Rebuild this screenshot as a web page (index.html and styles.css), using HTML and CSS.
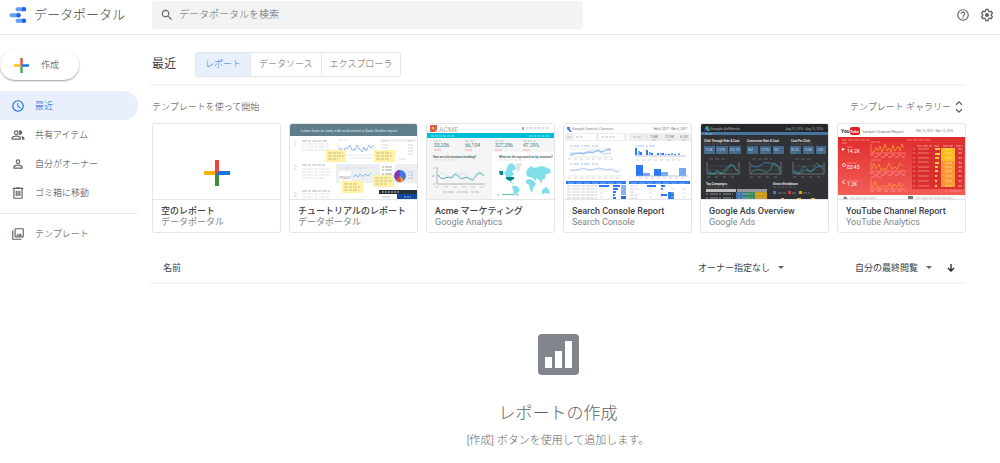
FILE: index.html
```html
<!DOCTYPE html>
<html lang="ja">
<head>
    <meta charset="UTF-8">
    <meta name="viewport" content="width=device-width, initial-scale=1.0">
    <title>データポータル</title>
    <link rel="stylesheet" href="styles.css">
</head>
<body>
    <header class="header">
        <a class="brand" href="#">
            <svg class="logo" viewBox="0 0 18 16" width="18" height="16">
                <path stroke="#669df6" stroke-width="4" stroke-linecap="round" d="M8.500 2.300h6M2.500 8.200h7M8.500 13.700h6"/>
                <circle cx="15" cy="2.300" r="2.200" fill="#1967e8"/>
                <circle cx="9.500" cy="8.200" r="2.200" fill="#1967e8"/>
                <circle cx="15" cy="13.700" r="2.200" fill="#1967e8"/>
            </svg>
            <span>データポータル</span>
        </a>
        <label class="search">
            <svg viewBox="0 0 24 24" width="14" height="14"><path d="M15.500 14h-.79l-.28-.27a6.500 6.500 0 1 0-.7.7l.27.28v.79l5 4.990L20.490 19zm-6 0a4.500 4.500 0 1 1 0-9 4.500 4.500 0 0 1 0 9z"/></svg>
            <input type="search" placeholder="データポータルを検索" aria-label="データポータルを検索">
        </label>
        <div class="header-actions">
            <button class="icon-button" aria-label="ヘルプ">
                <svg viewBox="0 0 24 24" width="14" height="14"><path d="M11 18h2v-2h-2zm1-16a10 10 0 1 0 0 20 10 10 0 0 0 0-20zm0 18a8 8 0 1 1 0-16 8 8 0 0 1 0 16zm0-14a4 4 0 0 0-4 4h2a2 2 0 1 1 4 0c0 2-3 1.750-3 5h2c0-2.250 3-2.500 3-5a4 4 0 0 0-4-4z"/></svg>
            </button>
            <button class="icon-button" aria-label="設定">
                <svg viewBox="0 0 24 24" width="14" height="14"><path fill="none" stroke="#5f6368" stroke-width="2.200" stroke-linejoin="round" d="M10 2.500h4l.6 2.800 2 1.200 2.700-.9 2 3.500-2 1.900v2l2 1.900-2 3.500-2.700-.9-2 1.200-.6 2.800h-4l-.6-2.800-2-1.200-2.700.9-2-3.500 2-1.900v-2l-2-1.900 2-3.500 2.700.9 2-1.200z"/><circle cx="12" cy="12" r="3.600"/></svg>
            </button>
        </div>
    </header>

    <div class="layout">
        <nav class="sidebar">
            <button class="create">
                <svg viewBox="0 0 26 26" width="15" height="15"><path fill="#ea4335" d="M11 0h4v11l-4 4z"/><path fill="#fbbc04" d="M0 11h11v4H0z"/><path fill="#34a853" d="M11 15h4v11h-4z"/><path fill="#1a73e8" d="M15 11h11v4H11z"/></svg>
                作成
            </button>
            <a class="nav-item active" href="#">
                <svg viewBox="0 0 24 24" width="14" height="14"><path d="M12 2a10 10 0 1 0 0 20 10 10 0 0 0 0-20zm0 18a8 8 0 1 1 0-16 8 8 0 0 1 0 16zm.5-13H11v6l5.200 3.200.8-1.300-4.500-2.700z"/></svg>
                最近
            </a>
            <a class="nav-item" href="#">
                <svg viewBox="0 0 24 24" width="14" height="14"><path d="M9 12a4 4 0 1 0 0-8 4 4 0 0 0 0 8zm0-6a2 2 0 1 1 0 4 2 2 0 0 1 0-4zm0 7c-2.700 0-8 1.300-8 4v3h16v-3c0-2.700-5.300-4-8-4zm6 5H3v-1c0-.7 3.100-2 6-2s6 1.300 6 2zm-.4-6.100A4 4 0 0 0 15 12a4 4 0 1 0-1.900-7.500 6 6 0 0 1 0 7zM17 13.500c1.200.9 2 2 2 3.500v3h4v-3c0-2-3-3.200-6-3.500z"/></svg>
                共有アイテム
            </a>
            <a class="nav-item" href="#">
                <svg viewBox="0 0 24 24" width="14" height="14"><path d="M12 12a4 4 0 1 0 0-8 4 4 0 0 0 0 8zm0-6a2 2 0 1 1 0 4 2 2 0 0 1 0-4zm0 7c-2.700 0-8 1.300-8 4v3h16v-3c0-2.700-5.300-4-8-4zm6 5H6v-1c0-.7 3.100-2 6-2s6 1.300 6 2z"/></svg>
                自分がオーナー
            </a>
            <a class="nav-item" href="#">
                <svg viewBox="0 0 24 24" width="14" height="14"><path d="M15 3V2H9v1H3v2h1v15a2 2 0 0 0 2 2h12a2 2 0 0 0 2-2V5h1V3zm3 17H6V5h12zM8 8h2v9H8zm3 0h2v9h-2zm3 0h2v9h-2z"/></svg>
                ゴミ箱に移動
            </a>
            <hr>
            <a class="nav-item" href="#">
                <svg viewBox="0 0 24 24" width="14" height="14"><path d="M20 4v12H8V4zm0-2H8a2 2 0 0 0-2 2v12a2 2 0 0 0 2 2h12a2 2 0 0 0 2-2V4a2 2 0 0 0-2-2zm-8.500 9.700 1.700 2.200 2.500-3.100L19 15H9zM2 6v14a2 2 0 0 0 2 2h14v-2H4V6z"/></svg>
                テンプレート
            </a>
        </nav>

        <main class="main">
            <div class="title-row">
                <h1>最近</h1>
                <div class="tabs">
                    <button class="selected">レポート</button>
                    <button>データソース</button>
                    <button>エクスプローラ</button>
                </div>
            </div>

            <div class="template-head">
                <span>テンプレートを使って開始</span>
                <button class="gallery">テンプレート ギャラリー
                    <svg viewBox="0 0 24 24" width="14" height="14"><path d="M12 4.800 16.200 9l1.600-1.600L12 1.600 6.200 7.400 7.800 9zm0 14.400L7.800 15l-1.600 1.600 5.800 5.800 5.800-5.800-1.600-1.600z"/></svg>
                </button>
            </div>

            <div class="cards">
                <a class="card" href="#">
                    <svg class="thumb" viewBox="0 0 127 75">
                        <path fill="#f44336" d="M62 36h4v13l-4 2z"/><path fill="#ffb300" d="M51 47h11v4H51z"/><path fill="#388e3c" d="M62 51h4v11h-4z"/><path fill="#1976d2" d="M66 47h11v4H62z"/>
                    </svg>
                    <div class="card-text"><strong>空のレポート</strong><span>データポータル</span></div>
                </a>

                <a class="card" href="#">
                    <svg class="thumb" viewBox="0 0 127 75">
                        <path fill="#607d8b" d="M0 0h127v12H0z"/>
                        <text x="11" y="8" font-size="4" fill="#dfe8ec">Learn how to view, edit and create a Data Studio report</text>
                        <path fill="#eceff1" d="M46 40h81v19H46z"/>
                        <g fill="#cfd4d6" font-size="7"><text x="3" y="22">1</text><text x="3" y="46">2</text><text x="3" y="73">3</text></g>
                        <path stroke="#90999c" stroke-dasharray="5 1 3 1" d="M12 17h26M12 41h23M12 67h28"/>
                        <path stroke="#d2d6d8" stroke-dasharray="4 1 6 1" d="M12 20h29M12 23h26M12 26h29M12 45h28M12 48h30M12 51h27M12 54h24M12 70h29M12 73h27M48 16h9M50 44h31M60 34h22"/>
                        <path fill="none" stroke="#dfe4e8" d="M48 18v14M48 25h38M48 31h38"/>
                        <path fill="none" stroke="#6b9df0" d="m49 24 2 1 2 4 2-5 3 0 2-3 2 5 3 0 2-5 3 5 2 2 2-5 2 4 3-6 2 3 3-3"/>
                        <path fill="#fff" d="M49 47h12v11H49z"/>
                        <text x="49" y="55" font-size="4" fill="#777">79,621</text>
                        <path fill="none" stroke="#6b9df0" d="m63 53 3-2 2 2 2-3 2 2 2 0 2-2 2 2 3-3"/>
                        <path fill="#f0f2f3" d="M90 15h36v3H90z"/>
                        <path stroke="#c5cacc" stroke-dasharray="7 20 5 4" d="M91 17h34M91 21h34M91 24h34M91 27h34M91 30h34M109 35h16"/>
                        <path fill="#fff" d="M90 40h15v16H90z"/><path stroke="#747b80" stroke-dasharray="2 1 7 2" d="M92 43h11M92 46h11M92 50h11"/>
                        <circle cx="110" cy="52" r="6" fill="#3f78ef"/><path fill="#8e35b5" d="M110 52v-6a6 6 0 0 0-4 10z"/><path fill="#ed4b32" d="m110 52-4 4q3 3 5 2z"/><path fill="#f7a900" d="m110 52 1 6 3-2z"/>
                        <path stroke="#8ba8ce" stroke-dasharray="1 1 3" d="M118 48h6M118 51h6M118 54h6"/>
                        <path fill="#fff1a5" d="M36 26h20v12H36zM84 26h21v12H84zM83 51h21v12H83zM52 57h21v12H52z"/>
                        <path stroke="#b7ae75" stroke-dasharray="4 1 3 1" d="M38 29h15M38 32h16M38 35h10M86 29h15M86 32h16M86 35h13M85 54h15M85 57h17M85 60h12M54 60h14M54 63h16M54 66h15"/>
                        <path fill="#263238" d="M89 66h38v4H89z"/><path fill="#0d47a1" d="M107 70h20v5h-20z"/><path stroke="#fff" stroke-dasharray="2 1" d="M92 68h18M114 73h7"/><path stroke="#aaa" d="M92 73h8"/>
                    </svg>
                    <div class="card-text"><strong>チュートリアルのレポート</strong><span>データポータル</span></div>
                </a>

                <a class="card" href="#">
                    <svg class="thumb" viewBox="0 0 127 75">
                        <path fill="#f5f5f5" d="M0 14h127v61H0z"/><path fill="#fff" d="M0 0h127v9H0zM65 28h62v47H65z"/>
                        <path fill="#ef5350" d="M3 1h7v7H3z"/><path stroke="#31bdb9" stroke-width="1" stroke-dasharray="1 1" d="m4 1 6 7M9 1 3 8"/><path fill="#ffca28" d="M5 3h2v2H5zM8 6h2v2H8z"/>
                        <text x="12" y="8" font-size="7" fill="#aaa">ACME</text>
                        <path fill="#aaa" d="M95 3h2v3h-2z"/><path stroke="#aaa" stroke-dasharray="2 1 4 1" d="M99 4h23"/>
                        <path fill="#00bcd4" d="M0 9h127v5H0z"/><path stroke="#c6f5fc" stroke-dasharray="3 1" d="M4 12h23M102 12h21"/>
                        <g fill="#31818e" font-size="5"><text x="7" y="23">53,206</text><text x="38" y="23">66,104</text><text x="68" y="23">327,296</text><text x="96" y="23">47.29%</text></g>
                        <path stroke="#a5aaac" stroke-dasharray="4 1" d="M7 17h7M38 17h9M68 17h10M96 17h13"/><path stroke="#ef8b84" d="M7 26h7M38 26h7M68 26h7M96 26h7"/>
                        <g fill="#55686b" font-size="3" font-weight="bold"><text x="6" y="34">How are site sessions trending?</text><text x="72" y="34">What are the top countries by sessions?</text></g>
                        <path stroke="#d2d5d6" stroke-dasharray="4 1" d="M6 36h22M72 36h26"/>
                        <path fill="none" stroke="#999" d="M10 43v17h48M6 44h2M5 52h3M6 60h2"/>
                        <path fill="none" stroke="#b4e2e8" d="M11 53q5-8 8-2t7 0 7 1q4-6 7 0t7 0 10-2"/>
                        <path fill="none" stroke="#238b98" d="M11 51q3 5 7 3t7 0q3-6 6-2t6 2 6 1 6-3 8 0"/>
                        <path stroke="#bbb" stroke-dasharray="4 5" d="M8 63h50"/><path stroke="#82aeb2" stroke-dasharray="3 1 7 3" d="M16 68h36"/>
                        <g fill="#80deea"><path d="m79 47 2-6 4-2 3 3 1 3-4 2 2 3-4 4 2 4 2 2-3-1-4-5-3-6zM85 62l5 0 3 4-3 4-3 1-1-5z"/><path d="m99 49 1-3 4-4 3 2 8-2 8 3 1 3-3 2-2 0-1 5-3 1 0 4-2-3-3-3-2 3-2-3-4-1-2-1zM99 56l4-1 4 2 2 3-3 4-1 5-2-3-1-5-3-2zM115 66l4-3 3 3 1 4-4-1-4 1z"/></g>
                        <path fill="#e1e6e7" d="m88 41 3-2 4 0-2 6-2 4-2-4z"/><path fill="#00838f" d="M72 47h4v4h-3zM79 53h8v2l-4 2-4-2z"/>
                        <path fill="#65b8c0" d="M75 70h12v1H75z"/><path stroke="#888" d="M70 71h2M89 71h3"/>
                    </svg>
                    <div class="card-text"><strong>Acme マーケティング</strong><span>Google Analytics</span></div>
                </a>

                <a class="card" href="#">
                    <svg class="thumb" viewBox="0 0 127 75">
                        <path fill="#4285f4" d="M3 3h3v2l2 3H6L3 5z"/><text x="8" y="6" font-size="4" fill="#888">Google Search Console</text><text x="123" y="6" text-anchor="end" font-size="3" fill="#666">Feb 6, 2017 - Mar 6, 2017</text>
                        <path fill="#eee" d="M1 9h62v8H1zM65 9h62v8H65z"/><path fill="#fff" d="M10 10h22v6H10zM35 10h25v6H35z"/>
                        <path stroke="#a3a3a3" stroke-dasharray="3 1" d="M3 13h5M12 13h7M37 13h14M69 13h9"/><path stroke="#ddd" d="M83 10v6"/>
                        <g fill="#777" font-size="4"><text x="86" y="14">7.8K</text><text x="101" y="14">213K</text><text x="116" y="14">6.30</text></g><path stroke="#7fc79c" stroke-dasharray="4 11" d="M88 16h34"/>
                        <path stroke="#7ea4ee" stroke-dasharray="2 1 6 2" d="M6 22h28M6 40h28M71 22h21"/>
                        <path stroke="#e0e0e0" d="M5 25h42M5 33h42M5 46h53M5 52h53"/>
                        <path fill="none" stroke="#4285f4" d="m6 31 5-1 4-1 5 1 4-2 5 1 5-3 4 2 4-2 4-1 0 2"/><path fill="none" stroke="#8bb4f8" d="m6 47 4-1 4 0 4-2 4 1 4 1 5-1 4-1 3 1 5 1 4-1 3 2 5 1M6 29l5 0 8 0 7-2 8 0 6 3 7-1"/>
                        <path stroke="#bbb" stroke-dasharray="3 3" d="M4 35h46M4 54h54M72 36h47M75 54h46"/>
                        <path fill="#2979f2" d="M71 24h2v7h-2zM76 28h2v3h-2zM82 26h2v5h-2zM87 29h2v2h-2zM93 29h2v2h-2zM98 29h2v2h-2zM104 30h2v1h-2zM110 30h2v1h-2zM72 41h7v11h-7zM90 45h7v7h-7z"/>
                        <path fill="#75a9fa" d="M74 27h2v4h-2zM85 28h2v3h-2zM96 29h2v2h-2zM101 30h2v1h-2zM107 29h2v2h-2zM114 29h2v2h-2zM79 49h7v3h-7zM97 48h7v4h-7zM115 44h7v8h-7z"/><path stroke="#aac" d="M71 32h51M71 52h53"/>
                        <path fill="#2979f2" d="M2 57h60v3H2zM65 57h61v3H65z"/><path stroke="#b5d1ff" stroke-dasharray="6 2" d="M4 59h56M67 59h57"/>
                        <path stroke="#bdbdbd" stroke-dasharray="4 1 8 1" d="M3 62h30M3 65h30M3 68h30M3 71h30M3 74h30M66 62h7M66 65h9M66 68h5M66 71h8M66 74h7"/>
                        <path fill="#2979f2" d="M35 61h10v2H35zM49 61h7v2h-7zM49 64h5v2h-5zM49 67h3v2h-3zM49 70h2v2h-2zM49 73h3v2h-3zM83 61h9v2h-9zM97 61h4v2h-4zM97 64h2v2h-2zM97 70h6v2h-6zM104 68h6v7h-6z"/><path fill="#8bb4f8" d="M57 61h5v3h-5zM57 64h5v7h-5z"/><path fill="#276ad0" d="M57 72h5v3h-5z"/>
                        <path stroke="#ccc" stroke-dasharray="3 8" d="M36 65h8M36 69h8M36 73h8M85 65h37M85 69h37M85 73h37"/>
                    </svg>
                    <div class="card-text"><strong>Search Console Report</strong><span>Search Console</span></div>
                </a>

                <a class="card" href="#">
                    <svg class="thumb" viewBox="0 0 127 75">
                        <path fill="#303236" d="M0 0h127v75H0z"/><path fill="#25272a" d="M0 0h127v8H0z"/><path fill="#4674a0" d="M0 8h127v3H0z"/><path stroke="#b7d4ed" stroke-dasharray="3 1" d="M4 10h8"/>
                        <path fill="#4285f4" d="m3 7 2-5 3 5H6L5 5z"/><path fill="#34a853" d="m5 2 2 0 2 5H7z"/><text x="9" y="6" font-size="4" fill="#a5abb0">Google AdWords</text><text x="122" y="6" text-anchor="end" font-size="3" fill="#a5abb0">Aug 10, 2016 - Aug 15, 2016</text>
                        <g fill="#e0e0e0" font-size="3" font-weight="bold"><text x="3" y="18">Click Through Rate &amp; Cost</text><text x="46" y="18">Conversion Rate &amp; Cost</text><text x="90" y="18">Cost Per Click</text><text x="5" y="61">Top Campaigns</text><text x="72" y="61">Device Breakdown</text></g>
                        <path stroke="#65686b" stroke-dasharray="3 1" d="M3 20h25M46 20h25M90 20h22M5 63h24M72 63h24"/>
                        <path fill="#42688c" d="M3 22h11v8H3zM15 22h12v8H15zM28 22h12v8H28zM46 22h11v8H46zM59 22h11v8H59zM72 22h11v8H72zM89 22h11v8H89zM102 22h11v8h-11zM115 22h10v8h-10z"/>
                        <g fill="#c5ddef" font-size="3"><text x="4" y="27">10.0K</text><text x="16" y="27">2.01%</text><text x="29" y="27">$22.7K</text><text x="47" y="27">967</text><text x="60" y="27">2.01%</text><text x="73" y="27">957</text><text x="90" y="27">$0.25</text><text x="103" y="27">10.0K</text><text x="116" y="27">2.89</text></g>
                        <path stroke="#558b68" stroke-dasharray="4 9" d="M5 29h34M48 29h34M91 29h32"/>
                        <path stroke="#777" stroke-dasharray="4 2" d="M8 35h18M51 35h20M94 35h18"/>
                        <path fill="none" stroke="#888c8f" d="M6 38v12h32V38M49 38v12h31V38M92 38v12h31V38"/><path stroke="#484d51" d="M7 42h30M7 46h30M50 42h29M50 46h29M93 42h29M93 46h29"/><path stroke="#888" stroke-dasharray="3 5" d="M6 53h32M49 53h31M92 53h31"/>
                        <path fill="none" stroke="#43a56d" d="m7 49 5 1 6-2 5 2 5-7 4-2 5 7M50 49q6-6 12-2t9-5 8 7M93 47l5 3 6-4 6 2 6-9 6 6"/><path fill="none" stroke="#4296d2" d="m7 47 5 3 4-4 4 4 5-6 5-4 7 7M50 41q6 4 10 0t12-1 7 5M93 48l5 1 5-7 7 6 6-5 6-1"/>
                        <path fill="#bdbdbd" d="M5 65h30v3H5z"/><path fill="#999" d="M36 65h30v3H36z"/><path fill="#3f72a8" d="M35 68h9v7h-9z"/><path fill="#34895a" d="M44 68h10v7H44z"/><path fill="#d39a00" d="M54 68h12v7H54z"/>
                        <path stroke="#b7b7b7" stroke-dasharray="2 2 8 1" d="M5 70h27M5 74h27M37 70h28M37 74h28"/>
                        <path fill="#367ed8" d="M72 67h3v3h-3z"/><path fill="#c94042" d="M87 67h3v3h-3z"/><path fill="#e6a500" d="M98 67h3v3h-3z"/><path stroke="#999" stroke-dasharray="4 1" d="M77 69h8M91 69h4M102 69h7"/>
                        <path fill="#e5b647" d="M80 74h3v1h-3zM96 74h4v1h-4zM110 74h4v1h-4z"/>
                    </svg>
                    <div class="card-text"><strong>Google Ads Overview</strong><span>Google Ads</span></div>
                </a>

                <a class="card" href="#">
                    <svg class="thumb" viewBox="0 0 127 75">
                        <defs><linearGradient id="red" x2="0" y2="1"><stop stop-color="#df2d2d"/><stop offset="1" stop-color="#f35d57"/></linearGradient></defs>
                        <path fill="url(#red)" d="M0 13h127v58H0z"/><rect x="12" y="3" width="10" height="8" rx="2" fill="#e32121"/>
                        <text x="3" y="9" font-size="5" font-weight="bold" fill="#333">You</text><text x="12" y="9" font-size="4" font-weight="bold" fill="#fff">Tube</text><text x="24" y="9" font-size="4" fill="#777">Sample Channel Report</text><text x="115" y="8" text-anchor="end" font-size="3" fill="#777">Feb 13, 2016 - Mar 13, 2016</text>
                        <path stroke="#ff9e96" stroke-dasharray="5 1" d="M4 16h28M69 16h23M4 19h5M33 18h9M9 23h6M9 39h10M9 57h13M33 36h10M33 53h10"/>
                        <g fill="#fff" font-size="5"><text x="9" y="29">14.2K</text><text x="9" y="45">03:43</text><text x="9" y="62">1.2K</text></g>
                        <path fill="#fff" d="m4 24 3 1-3 2z"/><circle cx="6" cy="41" r="1.500" fill="none" stroke="#fff"/><path fill="none" stroke="#fff" d="m7 56-3 2 3 2"/>
                        <path fill="none" stroke="#ff978d" d="M33 20v9h35M33 38v9h35M33 55v10h35"/>
                        <path fill="none" stroke="#ffab2b" d="m34 28 2 0 2-5 2 4 2-5 2 6 3-8 2 7 2-3 2 4 2-7 2 6 3-5 2 5 2-7 2 4M34 45l2-6 2 6 3-5 2 6 3-2 2 2 3-7 3 6 3-2 2 2 3-6 3 3M34 64l3-7 2 6 3 1 3-3 2 2 3-1 2-3 2 5 2-4 3 3 2-4 2 4 3-3"/>
                        <path stroke="#ffb0a6" stroke-dasharray="4 3" d="M32 31h36M36 33h31M32 49h36M36 51h31M32 67h36"/>
                        <path fill="#dc3130" d="M74 19h52v46H74z"/><path stroke="#ffc6bd" stroke-dasharray="5 1" d="M79 22h15M96 22h5M105 22h10M118 22h7"/>
                        <path fill="#ffbd20" d="M103 24h14v13h-14z"/><path fill="#ff9833" d="M103 37h14v26h-14z"/><path stroke="#cf2929" d="M74 27h29M74 31h29M74 36h29M74 40h29M74 45h29M74 49h29M74 54h29M74 58h29"/>
                        <path stroke="#ffd33b" stroke-width="2" d="M97 25h5M97 30h5M97 34h4M97 39h4M97 43h3M97 47h3M97 52h2M97 57h2M97 62h2"/>
                        <path stroke="#ff9f95" stroke-dasharray="2 3 11 29" d="M75 25h49M75 29h49M75 34h49M75 38h49M75 43h49M75 47h49M75 52h49M75 57h49M75 62h49M107 67h17"/>
                        <path stroke="#ffe4aa" d="M107 25h7M107 29h7M107 34h7M107 39h7M107 43h7M107 47h7M107 52h7M107 57h7M107 62h7M121 25h3M121 29h3M121 34h3M121 39h3M121 43h3M121 47h3M121 52h3M121 57h3M121 62h3"/>
                        <path fill="#777" d="m5 75 2-3 3 3zM70 72h5v3h-5z"/><path stroke="#aaa" stroke-dasharray="4 1 7 1" d="M12 74h27M78 74h37"/>
                    </svg>
                    <div class="card-text"><strong>YouTube Channel Report</strong><span>YouTube Analytics</span></div>
                </a>
            </div>

            <table class="reports">
                <thead>
                    <tr>
                        <th class="col-name">名前</th>
                        <th class="col-owner">
                            <div class="dropdown">
                                <select aria-label="オーナー"><option>オーナー指定なし</option></select>
                                <svg viewBox="0 0 6 3" width="6" height="3"><path d="M0 0h6L3 3z"/></svg>
                            </div>
                        </th>
                        <th class="col-viewed">
                            <div class="dropdown">
                                <select aria-label="並べ替え"><option>自分の最終閲覧</option></select>
                                <svg viewBox="0 0 6 3" width="6" height="3"><path d="M0 0h6L3 3z"/></svg>
                                <button class="sort" aria-label="降順">
                                    <svg viewBox="0 0 8 8" width="8" height="8"><path fill="none" stroke="#202124" stroke-width="1.300" d="M4 0v7M1 4l3 3 3-3"/></svg>
                                </button>
                            </div>
                        </th>
                    </tr>
                </thead>
            </table>

            <section class="empty">
                <svg viewBox="0 0 41 41" width="41" height="41"><rect width="41" height="41" rx="4" fill="#80868b"/><path fill="#fff" d="M7 23h7v11H7zM17 17h7v17h-7zM27 7h7v27h-7z"/></svg>
                <h2>レポートの作成</h2>
                <p>[作成] ボタンを使用して追加します。</p>
            </section>
        </main>
    </div>
</body>
</html>
```
FILE: styles.css
```css
* {
    box-sizing: border-box;
}

body {
    margin: 0;
    background-color: #fff;
    color: #3c4043;
    font-family: Roboto, "Noto Sans CJK JP", sans-serif;
    font-size: 9px;
    font-weight: 300;
    line-height: 12px;
}

a {
    color: inherit;
    text-decoration: none;
}

button, input, select {
    font: inherit;
    color: inherit;
    border: none;
    background: none;
    padding: 0;
    margin: 0;
}

button {
    cursor: pointer;
}

svg {
    display: block;
    flex-shrink: 0;
    fill: #5f6368;
}

.header {
    display: flex;
    align-items: center;
    height: 35px;
    padding-bottom: 5px;
    border-bottom: 1px solid #e8e8e8;
}

.brand {
    display: flex;
    align-items: center;
    gap: 7px;
    width: 152px;
    padding-left: 9px;
    font-size: 13px;
    line-height: 20px;
}

.search {
    display: flex;
    align-items: center;
    gap: 5px;
    flex: 0 1 431px;
    height: 28px;
    padding-left: 8px;
    border-radius: 4px;
    background-color: #f3f3f3;
}

.search input {
    flex: 1;
    font-size: 10px;
    outline: none;
}

.search input::placeholder {
    color: #5f6368;
    opacity: 1;
}

.header-actions {
    display: flex;
    gap: 10px;
    margin-left: auto;
    padding-right: 6px;
}

.layout {
    display: flex;
}

.sidebar {
    width: 138px;
    margin-right: 12px;
    padding-top: 15px;
    flex-shrink: 0;
}

.create {
    display: flex;
    align-items: center;
    gap: 12px;
    width: 79px;
    height: 30px;
    margin-bottom: 11px;
    padding-left: 14px;
    border-radius: 15px;
    box-shadow: 0 1px 2px rgba(60, 64, 67, 0.5);
}

.nav-item {
    display: flex;
    align-items: center;
    gap: 10px;
    height: 29px;
    padding-left: 11px;
}

.nav-item.active {
    border-radius: 0 15px 15px 0;
    background-color: #e8f0fe;
    color: #1967d2;
}

.nav-item.active svg {
    fill: #1967d2;
}

.sidebar hr {
    margin: 6px 0 5px;
    border: none;
    border-top: 1px solid #e8e8e8;
}

.main {
    flex: 1;
    min-width: 0;
    padding-right: 34px;
}

.title-row {
    display: flex;
    align-items: center;
    gap: 19px;
    height: 51px;
    padding: 9px 0 0 2px;
    border-bottom: 2px solid #f5f5f5;
}

h1 {
    margin: 0;
    font-size: 12px;
    font-weight: 400;
}

.tabs {
    display: flex;
    border: 1px solid #e4e5e7;
    border-radius: 3px;
    color: #5f6368;
}

.tabs button {
    height: 23px;
    padding: 0 8px;
}

.tabs button + button {
    border-left: 1px solid #e4e5e7;
}

.tabs .selected {
    padding: 0 9px;
    background-color: #e8f0fe;
    color: #2f73f0;
}

.template-head {
    display: flex;
    align-items: center;
    justify-content: space-between;
    height: 37px;
    padding-top: 5px;
    padding-left: 2px;
}

.gallery {
    display: flex;
    align-items: center;
    gap: 1px;
}

.cards {
    display: grid;
    grid-template-columns: repeat(6, 1fr);
    gap: 8px;
    padding-left: 2px;
}

.card {
    overflow: hidden;
    border: 1px solid #e4e5e7;
    border-radius: 3px;
}

.thumb {
    width: 100%;
    height: auto;
    font-weight: 400;
    stroke-width: 0.7;
}

.thumb text {
    stroke: none;
}

.card-text {
    display: flex;
    flex-direction: column;
    height: 33px;
    padding: 6px 8px 0;
    border-top: 1px solid #e4e5e7;
    line-height: 11px;
    white-space: nowrap;
}

.card-text strong {
    font-weight: 500;
}

.card-text strong:lang(ja) {
    color: #3c4043;
}

.card-text span {
    color: #80868b;
    font-weight: 400;
}

.reports {
    width: 100%;
    margin-top: 20px;
    border-collapse: collapse;
    border-bottom: 2px solid #f5f5f5;
}

.reports th {
    height: 30px;
    padding: 0;
    font-weight: 400;
    text-align: left;
}

.reports .col-name {
    padding-left: 13px;
}

.col-owner {
    width: 157px;
}

.col-viewed {
    width: 111px;
}

.dropdown {
    display: flex;
    align-items: center;
    gap: 7px;
}

.dropdown select {
    appearance: none;
}

.sort {
    margin-left: 8px;
}

.empty {
    display: flex;
    flex-direction: column;
    align-items: center;
    padding-top: 50px;
    color: #5f6368;
}

.empty h2 {
    margin: 24px 0 0;
    font-size: 17px;
    font-weight: 300;
    line-height: 28px;
}

.empty p {
    margin: 6px 0 0;
    font-size: 11px;
    line-height: 16px;
}
```
